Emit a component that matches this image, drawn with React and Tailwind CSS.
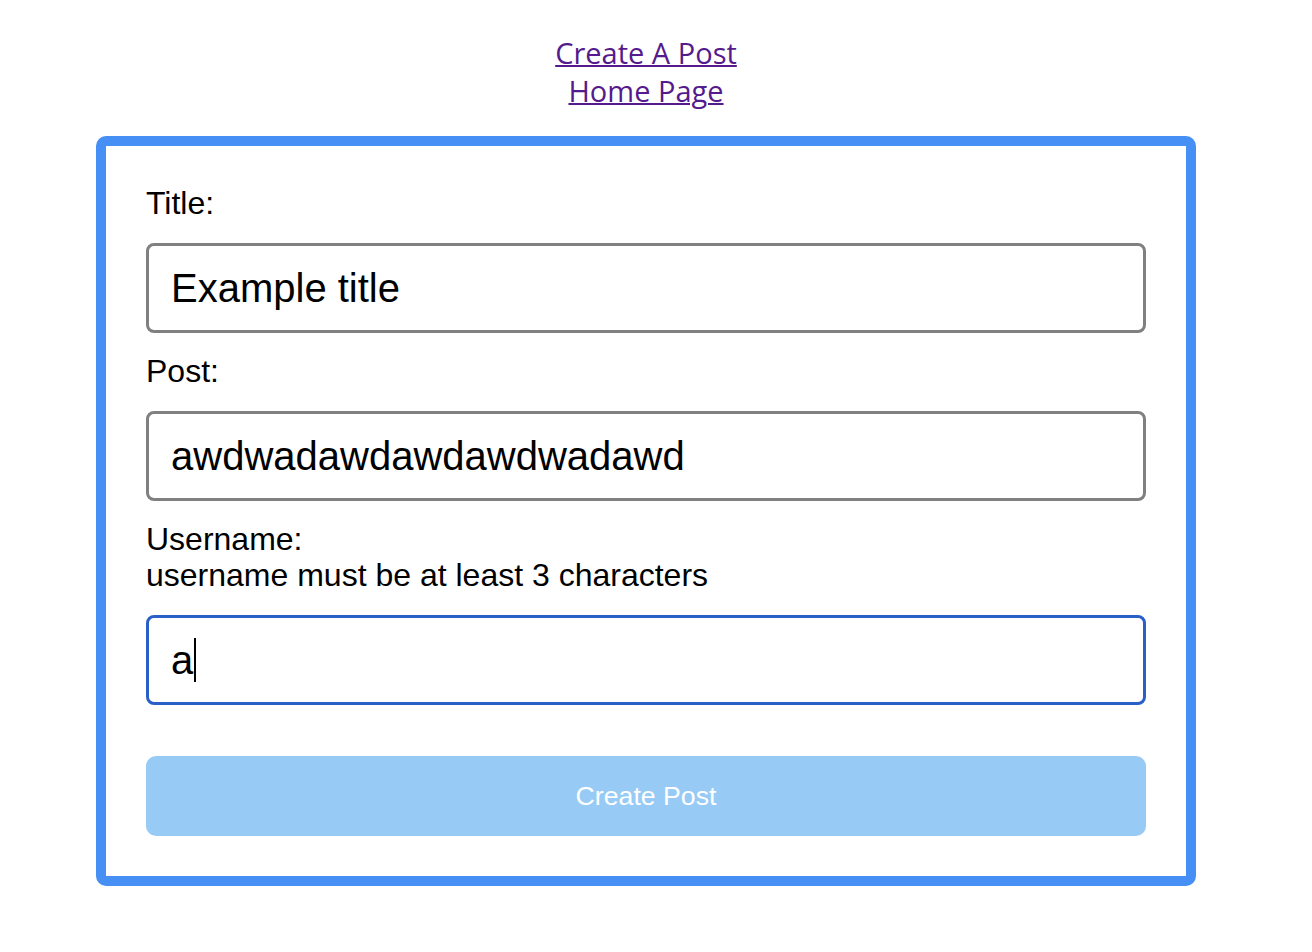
export default function App() {
    const fieldClass =
        'block w-full h-[90px] rounded-[8px] border-[3px] border-[#808080] px-[22px] text-[40px] text-black bg-white outline-none';

    return (
        <div className="w-[1292px] min-h-[952px] bg-white font-['Liberation_Sans',Arial,sans-serif]">
            <nav className="flex flex-col items-center pt-[34px] font-['Open_Sans',sans-serif] text-[29px] leading-[38px]">
                <a href="#" className="text-[#551a8b] underline decoration-2">Create A Post</a>
                <a href="#" className="text-[#551a8b] underline decoration-2">Home Page</a>
            </nav>

            <form className="mx-auto mt-[26px] w-[1100px] rounded-[10px] border-[10px] border-[#468ff5] px-[40px] pt-[39px] pb-[40px]">
                <label className="block text-[32px] leading-[36px] text-black">Title:</label>
                <input className={`mt-[22px] ${fieldClass}`} defaultValue="Example title" />

                <label className="mt-[20px] block text-[32px] leading-[36px] text-black">Post:</label>
                <input className={`mt-[22px] ${fieldClass}`} defaultValue="awdwadawdawdawdwadawd" />

                <div className="mt-[20px] text-[32px] leading-[36px] text-black">
                    <label className="block">Username:</label>
                    <p>username must be at least 3 characters</p>
                </div>
                <div className="mt-[22px] flex h-[90px] w-full items-center rounded-[8px] border-[3px] border-[#2b5fc8] px-[22px] text-[40px] text-black">
                    <span>a</span>
                    <span className="ml-[1px] h-[44px] w-[2px] bg-black" />
                </div>

                <button
                    type="button"
                    disabled
                    className="mt-[51px] block h-[80px] w-full rounded-[10px] bg-[#97cbf5] text-[26.67px] text-white"
                >
                    Create Post
                </button>
            </form>
        </div>
    );
}
